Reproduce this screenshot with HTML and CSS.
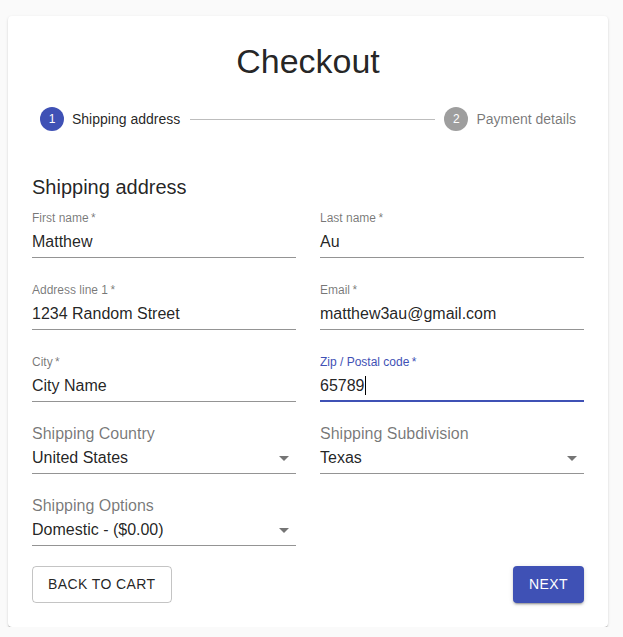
FILE: index.html
```html
<!DOCTYPE html>
<html lang="en">
<head>
<meta charset="utf-8">
<title>Checkout</title>
<link rel="stylesheet" href="styles.css">
</head>
<body>
<main class="page">
  <div class="card">
    <h1 class="title">Checkout</h1>
    <div class="stepper">
      <div class="step">
        <div class="step-icon active">1</div>
        <span class="step-label active">Shipping address</span>
      </div>
      <div class="connector"></div>
      <div class="step">
        <div class="step-icon">2</div>
        <span class="step-label">Payment details</span>
      </div>
    </div>
    <h2 class="section-title">Shipping address</h2>
    <div class="form-grid">
      <div class="field">
        <label class="field-label">First name&thinsp;*</label>
        <div class="input">Matthew</div>
      </div>
      <div class="field">
        <label class="field-label">Last name&thinsp;*</label>
        <div class="input">Au</div>
      </div>
      <div class="field">
        <label class="field-label">Address line 1&thinsp;*</label>
        <div class="input">1234 Random Street</div>
      </div>
      <div class="field">
        <label class="field-label">Email&thinsp;*</label>
        <div class="input">matthew3au@gmail.com</div>
      </div>
      <div class="field">
        <label class="field-label">City&thinsp;*</label>
        <div class="input">City Name</div>
      </div>
      <div class="field">
        <label class="field-label focused">Zip / Postal code&thinsp;*</label>
        <div class="input focused">65789<span class="caret"></span></div>
      </div>
      <div class="field">
        <label class="select-label">Shipping Country</label>
        <div class="input select">United States
          <svg class="arrow" viewBox="0 0 24 24" width="24" height="24"><path d="M7 10l5 5 5-5z"/></svg>
        </div>
      </div>
      <div class="field">
        <label class="select-label">Shipping Subdivision</label>
        <div class="input select">Texas
          <svg class="arrow" viewBox="0 0 24 24" width="24" height="24"><path d="M7 10l5 5 5-5z"/></svg>
        </div>
      </div>
      <div class="field">
        <label class="select-label">Shipping Options</label>
        <div class="input select">Domestic - ($0.00)
          <svg class="arrow" viewBox="0 0 24 24" width="24" height="24"><path d="M7 10l5 5 5-5z"/></svg>
        </div>
      </div>
    </div>
    <div class="actions">
      <button class="btn btn-outlined" type="button">Back to Cart</button>
      <button class="btn btn-contained" type="button">Next</button>
    </div>
  </div>
</main>
</body>
</html>
```

FILE: styles.css
```css
* { box-sizing: border-box; }

html, body {
  margin: 0;
  padding: 0;
  background: #fafafa;
  font-family: "Liberation Sans", Arial, Helvetica, sans-serif;
  color: rgba(0, 0, 0, 0.87);
}

.page {
  padding: 16px 0 0 8px;
}

.card {
  width: 600px;
  background: #fff;
  border-radius: 4px;
  padding: 24px;
  box-shadow: 0 2px 1px -1px rgba(0,0,0,0.2), 0 1px 1px 0 rgba(0,0,0,0.14), 0 1px 3px 0 rgba(0,0,0,0.12);
}

.title {
  margin: 0;
  font-size: 34px;
  font-weight: 400;
  line-height: 42px;
  text-align: center;
}

.stepper {
  display: flex;
  align-items: center;
  padding: 25px 0 40px;
}

.step {
  display: flex;
  align-items: center;
  padding: 0 8px;
}

.step-icon {
  width: 24px;
  height: 24px;
  border-radius: 50%;
  background: #9e9e9e;
  color: #fff;
  font-size: 12px;
  line-height: 24px;
  text-align: center;
  margin-right: 8px;
}

.step-icon.active { background: #3f51b5; }

.step-label {
  font-size: 14px;
  line-height: 20px;
  color: rgba(0, 0, 0, 0.54);
}

.step-label.active { color: rgba(0, 0, 0, 0.87); }

.connector {
  flex: 1 1 auto;
  margin: 0 1px 0 2px;
  border-top: 1px solid #bdbdbd;
}

.section-title {
  margin: 0 0 7px;
  font-size: 20px;
  font-weight: 400;
  line-height: 32px;
}

.form-grid {
  display: grid;
  grid-template-columns: 1fr 1fr;
  column-gap: 24px;
  row-gap: 24px;
}

.field {
  display: flex;
  flex-direction: column;
}

.field-label {
  display: block;
  height: 16px;
  padding-top: 1.5px;
  font-size: 12px;
  line-height: 12px;
  color: rgba(0, 0, 0, 0.54);
}

.field-label.focused { color: #3f51b5; }

.select-label {
  display: block;
  height: 16px;
  font-size: 16px;
  line-height: 16px;
  color: rgba(0, 0, 0, 0.54);
}

.input {
  position: relative;
  height: 32px;
  padding: 6px 0 6px;
  font-size: 16px;
  line-height: 19px;
  color: rgba(0, 0, 0, 0.87);
  border-bottom: 1px solid rgba(0, 0, 0, 0.42);
  white-space: nowrap;
}

.input.focused {
  border-bottom: 2px solid #3f51b5;
  padding-bottom: 5px;
}

.caret {
  display: inline-block;
  width: 1px;
  height: 19px;
  background: #000;
  vertical-align: top;
}

.arrow {
  position: absolute;
  right: 0;
  top: 4px;
  fill: rgba(0, 0, 0, 0.54);
}

.actions {
  display: flex;
  justify-content: space-between;
  margin-top: 20px;
}

.btn {
  font-family: inherit;
  font-size: 14px;
  line-height: 25px;
  letter-spacing: 0.4px;
  text-transform: uppercase;
  border-radius: 4px;
  min-width: 64px;
  height: 37px;
  cursor: pointer;
}

.btn-outlined {
  background: transparent;
  color: rgba(0, 0, 0, 0.87);
  border: 1px solid rgba(0, 0, 0, 0.23);
  padding: 5px 15px;
}

.btn-contained {
  background: #3f51b5;
  color: #fff;
  border: 0;
  padding: 6px 16px;
  box-shadow: 0 3px 1px -2px rgba(0,0,0,0.2), 0 2px 2px 0 rgba(0,0,0,0.14), 0 1px 5px 0 rgba(0,0,0,0.12);
}
```
